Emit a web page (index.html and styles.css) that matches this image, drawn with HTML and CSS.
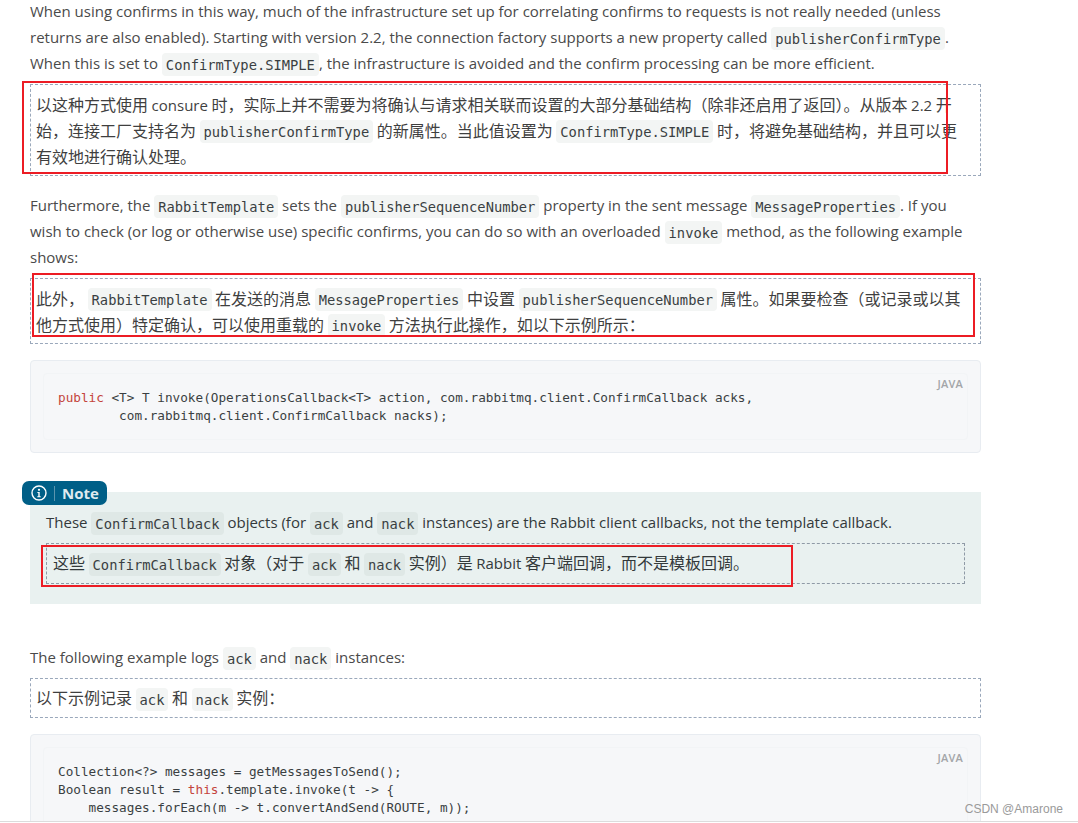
FILE: index.html
```html
<!DOCTYPE html>
<html lang="en">
<head>
<meta charset="utf-8">
<title>Publisher confirms</title>
<link rel="stylesheet" href="styles.css">
</head>
<body>
<main class="page">
  <p class="para first">When using confirms in this way, much of the infrastructure set up for correlating confirms to requests is not really needed (unless returns are also enabled). Starting with version 2.2, the connection factory supports a new property called <code>publisherConfirmType</code>. When this is set to <code>ConfirmType.SIMPLE</code>, the infrastructure is avoided and the confirm processing can be more efficient.</p>
  <p class="trans t1" lang="zh">以这种方式使用 <span class="lat">consure</span> 时，实际上并不需要为将确认与请求相关联而设置的大部分基础结构（除非还启用了返回）。从版本 <span class="lat">2.2</span> 开始，连接工厂支持名为 <code>publisherConfirmType</code> 的新属性。当此值设置为 <code>ConfirmType.SIMPLE</code> 时，将避免基础结构，并且可以更有效地进行确认处理。</p>
  <p class="para p2">Furthermore, the <code>RabbitTemplate</code> sets the <code>publisherSequenceNumber</code> property in the sent message <code>MessageProperties</code>. If you wish to check (or log or otherwise use) specific confirms, you can do so with an overloaded <code>invoke</code> method, as the following example shows:</p>
  <p class="trans t2" lang="zh">此外， <code>RabbitTemplate</code> 在发送的消息 <code>MessageProperties</code> 中设置 <code>publisherSequenceNumber</code> 属性。如果要检查（或记录或以其他方式使用）特定确认，可以使用重载的 <code>invoke</code> 方法执行此操作，如以下示例所示：</p>
  <div class="listing l1">
    <span class="lang">JAVA</span>
    <pre class="inner"><span class="kw">public</span> &lt;T&gt; T invoke(OperationsCallback&lt;T&gt; action, com.rabbitmq.client.ConfirmCallback acks,
        com.rabbitmq.client.ConfirmCallback nacks);</pre>
  </div>
  <section class="note">
    <div class="tag">
      <svg class="tag-icon" viewBox="0 0 16 16" width="16" height="16" aria-hidden="true"><circle cx="8" cy="8" r="7" fill="none" stroke="#fff" stroke-width="1.4"/><circle cx="8" cy="4.8" r="1.1" fill="#fff"/><path d="M6.4 7h2.3v4.2h1v1H6.3v-1h1V8H6.4z" fill="#fff"/></svg>
      <span class="tag-sep"></span>
      <span class="tag-label">Note</span>
    </div>
    <p class="note-text">These <code>ConfirmCallback</code> objects (for <code>ack</code> and <code>nack</code> instances) are the Rabbit client callbacks, not the template callback.</p>
    <p class="trans t3" lang="zh">这些 <code>ConfirmCallback</code> 对象（对于 <code>ack</code> 和 <code>nack</code> 实例）是 <span class="lat">Rabbit</span> 客户端回调，而不是模板回调。</p>
    <div class="mark m3"></div>
  </section>
  <p class="para p3">The following example logs <code>ack</code> and <code>nack</code> instances:</p>
  <p class="trans t4" lang="zh">以下示例记录 <code>ack</code> 和 <code>nack</code> 实例：</p>
  <div class="listing l2">
    <span class="lang">JAVA</span>
    <pre class="inner">Collection&lt;?&gt; messages = getMessagesToSend();
Boolean result = <span class="kw">this</span>.template.invoke(t -&gt; {
    messages.forEach(m -&gt; t.convertAndSend(ROUTE, m));
    t.waitForConfirmsOrDie(10_000);</pre>
  </div>
  <div class="mark m1"></div>
  <div class="mark m2"></div>
  <div class="watermark">CSDN @Amarone</div>
</main>
</body>
</html>
```

FILE: styles.css
```css
html, body {
  margin: 0;
  padding: 0;
  background: #fff;
}
.page {
  position: relative;
  width: 1078px;
  height: 822px;
  overflow: hidden;
  box-sizing: border-box;
  padding: 0 97px 0 30px;
  border-bottom: 1px solid #dcdcdc;
  font-family: "Open Sans", "Noto Sans CJK SC", sans-serif;
  font-size: 15px;
  line-height: 26px;
  color: #4a4a4a;
}
p { margin: 0; }
code {
  font-family: "DejaVu Sans Mono", monospace;
  font-size: 13.75px;
  line-height: 1;
  background: #f3f5f4;
  border-radius: 4px;
  padding: 3.5px 4px;
  color: #3a3f42;
}
.first { margin-top: -2px; }
.trans {
  border: 1px dashed #9aa8bb;
  padding: 6px 6px 6px 5px;
  font-family: "Noto Sans CJK SC", sans-serif;
  font-size: 16px;
  color: #3f3f3f;
}
.trans code { vertical-align: 1px; }
.lat {
  font-family: "Open Sans", sans-serif;
  font-size: 15px;
  line-height: 1;
}
.t1 { margin-top: 8px; padding-right: 12px; }
.p2 { margin-top: 16px; padding-right: 11px; }
.t2 { margin-top: 8px; padding-right: 12px; }
.listing {
  position: relative;
  box-sizing: border-box;
  background: #f6f7f9;
  border: 1px solid #e8ecf1;
  border-radius: 4px;
  padding: 12px;
}
.l1 { margin-top: 16px; height: 93px; }
.l2 { margin-top: 16px; height: 140px; }
.inner {
  margin: 0;
  height: 100%;
  box-sizing: border-box;
  padding: 15px 14px 0;
  border: 1px solid #f2f4f6;
  border-radius: 4px;
  font-family: "DejaVu Sans Mono", monospace;
  font-size: 12.7px;
  line-height: 18px;
  color: #3a3f42;
}
.kw { color: #c4453c; }
.lang {
  position: absolute;
  top: 17px;
  right: 17px;
  font-size: 11px;
  line-height: 12px;
  font-weight: 600;
  letter-spacing: 0.2px;
  color: #a3a5a8;
}
.note {
  position: relative;
  margin-top: 39px;
  height: 112px;
  box-sizing: border-box;
  padding: 17px 16px 0;
  background: #e9f1f0;
}
.note code { background: #dfe8e6; }
.note-text { color: #33393b; }
.tag {
  position: absolute;
  top: -11px;
  left: -8px;
  height: 24px;
  box-sizing: border-box;
  padding: 0 8px 0 9px;
  display: flex;
  align-items: center;
  gap: 7px;
  background: #005f87;
  border-radius: 7px;
  color: #fff;
}
.tag-sep {
  width: 1px;
  height: 15px;
  background: #5c95ae;
}
.tag-label {
  font-size: 15px;
  font-weight: 700;
  color: #dfeaef;
}
.t3 {
  margin-top: 8px;
  height: 41px;
  box-sizing: border-box;
  padding: 5px 6px;
  border-color: #8f9aa6;
  color: #33393b;
}
.t3 code { vertical-align: 0; }
.p3 { margin-top: 40px; }
.t4 {
  margin-top: 8px;
  padding: 5px 6px 7px 5px;
}
.t4 code { vertical-align: 0; }
.mark {
  position: absolute;
  border: 2px solid #ec1c24;
  box-sizing: border-box;
}
.m1 { left: 22px; top: 81px; width: 926px; height: 93px; }
.m2 { left: 32px; top: 273px; width: 943px; height: 64px; }
.m3 { left: 11px; top: 53px; width: 752px; height: 42px; }
.watermark {
  position: absolute;
  right: 15px;
  bottom: 5px;
  font-family: "Liberation Sans", sans-serif;
  font-size: 12px;
  line-height: 14px;
  color: #9a9a9a;
}
```
